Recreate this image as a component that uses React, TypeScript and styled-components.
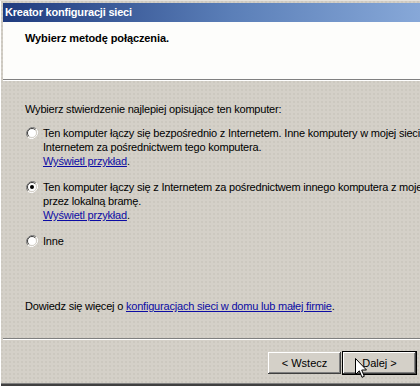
import styled, { createGlobalStyle } from "styled-components";

const GlobalStyle = createGlobalStyle`
  body {
    margin: 0;
    overflow: hidden;
    background: #d4d0c8;
    font-family: "Liberation Sans", Arial, sans-serif;
    font-size: 11px;
  }
`;

const Window = styled.div`
  position: relative;
  width: 420px;
  height: 386px;
  box-sizing: border-box;
  padding: 3px 0 3px 3px;
  display: flex;
  flex-direction: column;
  overflow: hidden;
  background-color: #d4d0c8;
  background-image: radial-gradient(#c2beb6 0.6px, transparent 0.8px);
  background-size: 4px 4px;
  box-shadow: inset 0 1px #e6e3de, inset 1px 0 #ffffff, inset 0 -1px #404040,
    inset 0 -2px #404040, inset 0 -3px #808080;
`;

const TitleBar = styled.div`
  height: 19px;
  line-height: 19px;
  padding-left: 2px;
  color: #ffffff;
  font-weight: bold;
  letter-spacing: -0.2px;
  background: linear-gradient(to right, #1f3b7e, #5b7fb8 55%, #87a8d8);
  white-space: nowrap;
`;

const Header = styled.div`
  height: 58px;
  background: #fdfdfb;
  border-bottom: 1px solid #808080;
  box-shadow: 0 1px #ffffff;
  padding: 10px 0 0 22px;
  box-sizing: border-box;
`;

const HeaderTitle = styled.div`
  font-weight: bold;
  color: #000;
  line-height: 13px;
  letter-spacing: -0.1px;
`;

const Body = styled.div`
  flex: 1;
  padding: 22px 0 0 22px;
  margin-top: 1px;
  color: #000;
  line-height: 13px;
  letter-spacing: -0.2px;
`;

const Intro = styled.div`
  margin-bottom: 10px;
  white-space: nowrap;
`;

const Options = styled.div`
  display: flex;
  flex-direction: column;
  gap: 12px;
`;

const Option = styled.label`
  display: flex;
  align-items: flex-start;
  gap: 5px;
  padding-left: 1px;
`;

const RadioBox = styled.span`
  flex: none;
  width: 12px;
  height: 12px;
  margin-top: 1px;
  display: block;
`;

const OptionText = styled.div`
  line-height: 14px;
  white-space: nowrap;
`;

const Link = styled.a`
  color: #0c0ca4;
  text-decoration: underline;
  cursor: pointer;
`;

const LearnMore = styled.div`
  margin-top: 52px;
  white-space: nowrap;
`;

const Footer = styled.div`
  height: 45px;
  border-top: 1px solid #808080;
  box-shadow: inset 0 1px #ffffff;
  box-sizing: border-box;
  padding: 13px 4px 0 0;
  display: flex;
  justify-content: flex-end;
  gap: 2px;
`;

const Button = styled.button<{ $default?: boolean }>`
  width: 73px;
  height: 22px;
  border: none;
  padding: 0;
  font-family: inherit;
  font-size: 11px;
  color: #000;
  background: #d4d0c8;
  box-shadow: inset -1px -1px #404040, inset 1px 1px #ffffff,
    inset -2px -2px #808080, inset 2px 2px #d4d0c8;
  outline: ${(p) => (p.$default ? "1px solid #000" : "none")};
`;

const Cursor = styled.svg`
  position: absolute;
  left: 355px;
  top: 358px;
`;

const Radio = ({ checked }: { checked?: boolean }) => (
  <RadioBox>
    <svg width="12" height="12" viewBox="0 0 12 12">
      <path d="M10.2 1.8 A6 6 0 0 0 1.8 10.2" fill="none" stroke="#808080" strokeWidth="1" />
      <path d="M1.8 10.2 A6 6 0 0 0 10.2 1.8" fill="none" stroke="#ffffff" strokeWidth="1" />
      <circle cx="6" cy="6" r="4.5" fill="#ffffff" />
      <path d="M9.2 2.8 A4.5 4.5 0 0 0 2.8 9.2" fill="none" stroke="#404040" strokeWidth="1" />
      <path d="M2.8 9.2 A4.5 4.5 0 0 0 9.2 2.8" fill="none" stroke="#d4d0c8" strokeWidth="1" />
      {checked && <circle cx="6" cy="6" r="2" fill="#000" />}
    </svg>
  </RadioBox>
);

const App = () => {
  return (
    <Window>
      <GlobalStyle />
      <TitleBar>Kreator konfiguracji sieci</TitleBar>
      <Header>
        <HeaderTitle>Wybierz metodę połączenia.</HeaderTitle>
      </Header>
      <Body>
        <Intro>Wybierz stwierdzenie najlepiej opisujące ten komputer:</Intro>
        <Options>
          <Option>
            <Radio />
            <OptionText>
              Ten komputer łączy się bezpośrednio z Internetem. Inne komputery w mojej sieci łączą się z
              <br />
              Internetem za pośrednictwem tego komputera.
              <br />
              <Link>Wyświetl przykład</Link>.
            </OptionText>
          </Option>
          <Option>
            <Radio checked />
            <OptionText>
              Ten komputer łączy się z Internetem za pośrednictwem innego komputera z mojej sieci lub
              <br />
              przez lokalną bramę.
              <br />
              <Link>Wyświetl przykład</Link>.
            </OptionText>
          </Option>
          <Option>
            <Radio />
            <OptionText>Inne</OptionText>
          </Option>
        </Options>
        <LearnMore>
          Dowiedz się więcej o <Link>konfiguracjach sieci w domu lub małej firmie</Link>.
        </LearnMore>
      </Body>
      <Footer>
        <Button>&lt; Wstecz</Button>
        <Button $default>Dalej &gt;</Button>
      </Footer>
      <Cursor width="13" height="21" viewBox="0 0 13 21">
        <path
          d="M0.5 0.5 L0.5 16.5 L4.3 12.8 L7 19.3 L9.3 18.3 L6.7 12 L11.5 12 Z"
          fill="#ffffff"
          stroke="#000000"
          strokeWidth="1"
          strokeLinejoin="miter"
        />
      </Cursor>
    </Window>
  );
};

export default App;
